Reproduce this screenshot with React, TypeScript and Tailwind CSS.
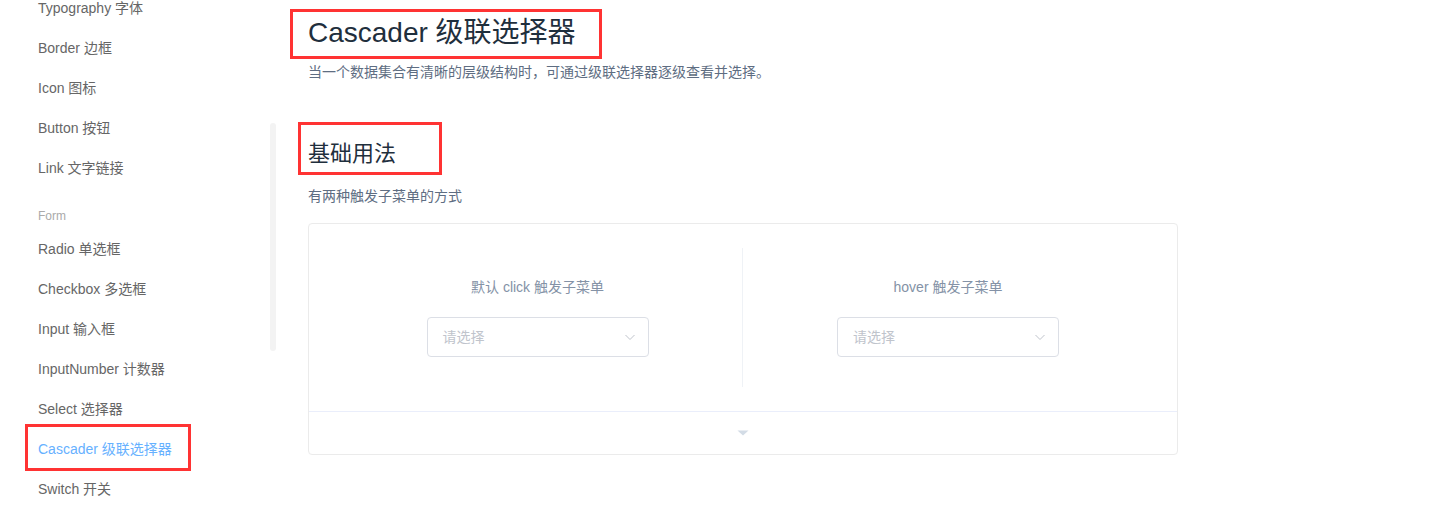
import React from 'react';

const navTop = ['Typography 字体', 'Border 边框', 'Icon 图标', 'Button 按钮', 'Link 文字链接'];
const navForm = ['Radio 单选框', 'Checkbox 多选框', 'Input 输入框', 'InputNumber 计数器', 'Select 选择器', 'Cascader 级联选择器', 'Switch 开关'];

const font = { fontFamily: '"Liberation Sans", "Noto Sans CJK SC", sans-serif' };

const RedBox = ({ className }: { className: string }) => (
  <div className={`pointer-events-none absolute border-[3px] border-[#f33] ${className}`} />
);

const CascaderInput = () => (
  <div className="mx-auto flex h-[40px] w-[222px] items-center justify-between rounded-[4px] border border-[#dcdfe6] bg-white pl-[15px] pr-[12px]">
    <span className="text-[14px] text-[#c0c4cc]">请选择</span>
    <svg width="12" height="12" viewBox="0 0 12 12" fill="none">
      <path d="M1.5 4 L6 8.5 L10.5 4" stroke="#c0c4cc" strokeWidth="1" />
    </svg>
  </div>
);

const App = () => {
  const active = 'Cascader 级联选择器';

  return (
    <div className="flex h-[514px] w-full overflow-hidden bg-white" style={font}>
      <aside className="relative w-[280px] shrink-0">
        <ul className="-mt-[12px]">
          {navTop.map((item) => (
            <li key={item} className="h-[40px] pl-[38px] text-[14px] leading-[40px] text-[#666]">{item}</li>
          ))}
        </ul>
        <div className="mt-[15px] pl-[38px] text-[12px] leading-[26px] text-[#aaa]">Form</div>
        <ul>
          {navForm.map((item) => (
            <li
              key={item}
              className={`relative h-[40px] pl-[38px] text-[14px] leading-[40px] ${item === active ? 'text-[#66b1ff]' : 'text-[#666]'}`}
            >
              {item}
              {item === active && <RedBox className="left-[25px] -top-[5px] h-[47px] w-[166px]" />}
            </li>
          ))}
        </ul>
        <div className="absolute left-[270px] top-[123px] h-[228px] w-[6px] rounded-full bg-[#f3f3f3]" />
      </aside>

      <main className="flex-1 pl-[28px]">
        <h2 className="relative mt-[13px] inline-block text-[28px] font-normal leading-[40px] text-[#1f2f3d]">
          Cascader 级联选择器
          <RedBox className="-left-[18px] -top-[4px] h-[50px] w-[312px]" />
        </h2>
        <p className="mt-[9px] text-[14px] leading-[21px] text-[#5e6d82]">
          当一个数据集合有清晰的层级结构时，可通过级联选择器逐级查看并选择。
        </p>

        <h3 className="relative mt-[56px] inline-block text-[22px] font-normal leading-[30px] text-[#1f2f3d]">
          基础用法
          <RedBox className="-left-[10px] -top-[17px] h-[53px] w-[144px]" />
        </h3>
        <p className="mt-[17px] text-[14px] leading-[21px] text-[#5e6d82]">有两种触发子菜单的方式</p>

        <div className="mt-[16px] w-[870px] rounded-[4px] border border-[#ebebeb]">
          <div className="flex p-[24px]">
            <div className="w-1/2 border-r border-[#eff2f6] py-[30px] text-center">
              <span className="mb-[20px] block text-[14px] leading-[19px] text-[#8492a6]">默认 click 触发子菜单</span>
              <CascaderInput />
            </div>
            <div className="w-1/2 py-[30px] text-center">
              <span className="mb-[20px] block text-[14px] leading-[19px] text-[#8492a6]">hover 触发子菜单</span>
              <CascaderInput />
            </div>
          </div>
          <div className="flex h-[43px] items-center justify-center border-t border-[#eaeefb]">
            <svg width="12" height="6" viewBox="0 0 12 6">
              <path d="M0.5 0.5 L11.5 0.5 L6 5.5 Z" fill="#d3dce6" />
            </svg>
          </div>
        </div>
      </main>
    </div>
  );
};

export default App;
